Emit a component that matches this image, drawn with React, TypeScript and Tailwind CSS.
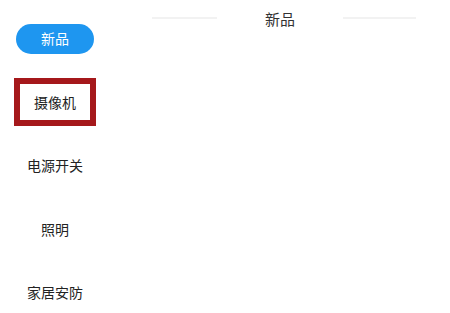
import React from "react";

const items = ["新品", "摄像机", "电源开关", "照明", "家居安防"];

export default function App() {
  return (
    <div
      className="flex w-[450px] h-[313px] bg-white overflow-hidden"
      style={{ fontFamily: '"Noto Sans CJK SC", "Noto Sans", sans-serif' }}
    >
      <div className="w-[110px] shrink-0 flex flex-col pt-[7px]">
        {items.map((t, i) => (
          <div key={t} className="h-[63.5px] shrink-0 flex items-center justify-center">
            {i === 0 ? (
              <div className="w-[78px] h-[30px] rounded-full bg-[#1e96f0] text-white text-[14px] flex items-center justify-center">
                {t}
              </div>
            ) : i === 1 ? (
              <div className="w-[82px] h-[48px] border-[6px] border-[#a5181b] text-[#222] text-[14px] flex items-center justify-center">
                {t}
              </div>
            ) : (
              <div className="text-[14px] text-[#222]">{t}</div>
            )}
          </div>
        ))}
      </div>
      <div className="flex-1 flex flex-col">
        <div className="h-[36px] flex items-center pl-[42px] pr-[34px]">
          <div className="w-[65px] h-[2px] bg-[#f2f2f2]" />
          <div className="flex-1 text-center text-[15px] text-[#333] leading-none">新品</div>
          <div className="w-[73px] h-[2px] bg-[#f2f2f2]" />
        </div>
      </div>
    </div>
  );
}
